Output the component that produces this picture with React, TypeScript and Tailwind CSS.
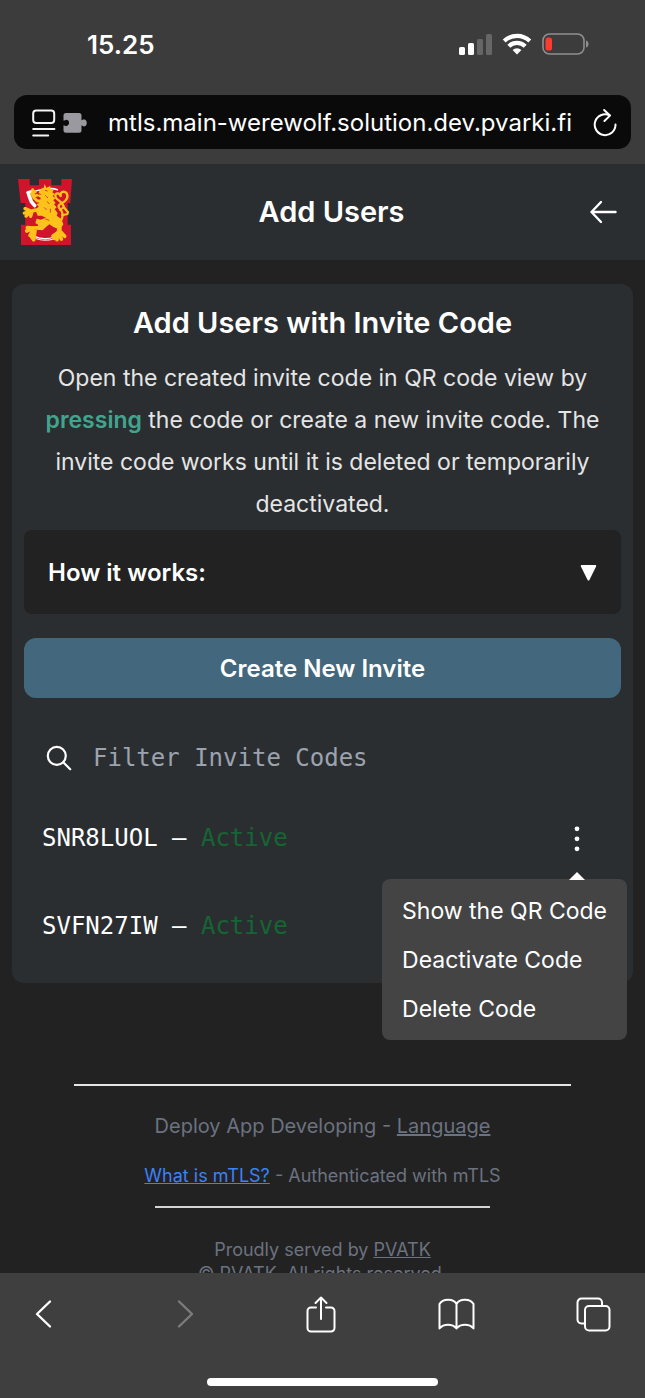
import React from "react";

function SignalIcon() {
  return (
    <svg width="34" height="21" viewBox="0 0 34 21" aria-hidden="true">
      <rect x="1" y="13" width="6" height="8" rx="1.6" fill="#fff" />
      <rect x="10" y="9" width="6" height="12" rx="1.6" fill="#fff" />
      <rect x="19" y="5" width="6" height="16" rx="1.6" fill="#666" />
      <rect x="28" y="0" width="6" height="21" rx="1.6" fill="#666" />
    </svg>
  );
}

function WifiIcon() {
  return (
    <svg width="30" height="22" viewBox="0 0 30 22" fill="none" stroke="#fff" strokeWidth="4.2" aria-hidden="true">
      <path d="M2.200 8a18.400 18.400 0 0 1 25.600 0" />
      <path d="M6.800 13.200a11.800 11.800 0 0 1 16.400 0" />
      <path d="M10.600 16.900a6.400 6.400 0 0 1 8.800 0L15 21.600z" fill="#fff" stroke="none" />
    </svg>
  );
}

function BatteryIcon() {
  return (
    <svg width="48" height="22" viewBox="0 0 48 22" aria-hidden="true">
      <rect x="1" y="1" width="41" height="20" rx="6.5" fill="none" stroke="#8e8e8e" strokeWidth="1.6" />
      <path d="M44 7.500c3.400 1 3.400 6 0 7z" fill="#8e8e8e" />
      <rect x="3.500" y="4.500" width="6.500" height="13" rx="2.600" fill="#ff3b30" />
    </svg>
  );
}

function ReaderIcon() {
  return (
    <svg width="24" height="28" viewBox="0 0 24 28" fill="none" stroke="#f4f4f4" strokeWidth="2" strokeLinecap="round" aria-hidden="true">
      <rect x="1.2" y="1.5" width="21" height="12.4" rx="3" />
      <path d="M1.2 20h21.2M1.2 26.600h15" />
    </svg>
  );
}

function PuzzleIcon() {
  return (
    <svg width="24" height="20" viewBox="0 0 24 20" aria-hidden="true">
      <path
        fill="#9a99a0"
        d="M3 0h13a2.500 2.500 0 0 1 2.500 2.500V7.200c1 .3 1.500-1.200 3-.8 3.200.8 3 6.600-.2 7-1.300.2-1.800-1.300-2.800-.9v4.700A2.500 2.500 0 0 1 16 19.700H3A2.500 2.500 0 0 1 .5 17.200v-5c1-.4 1.500 1 3 .8 3.400-.6 3.400-5.600.2-6.200C2.200 6.600 1.500 8 .5 7.600V2.500A2.500 2.500 0 0 1 3 0z"
      />
    </svg>
  );
}

function ReloadIcon() {
  return (
    <svg width="24" height="30" viewBox="0 0 24 30" fill="none" stroke="#fff" strokeWidth="2" strokeLinecap="round" strokeLinejoin="round" aria-hidden="true">
      <path d="M22.500 16.500A10.400 10.400 0 1 1 16.500 7.300" />
      <path d="M11.100 2l5.900 5.600-5.600 5.400" />
    </svg>
  );
}

function Crest() {
  return (
    <svg width="56" height="68" viewBox="54 55 168 204" role="img" aria-label="Crest">
      <path fill="#d0142c" d="M54 58H89V77H117V58H154V77H184V58H216L211 130H203V195H213V256H63V195H76V130H62Z" />
      <g fill="none" stroke="#fff" strokeLinecap="round">
        <path d="M84 99L96 96M86 104L94 126L104 138" strokeWidth="11" />
        <path d="M104 95C116 90 128 91 138 89C150 86 160 86 172 90" strokeWidth="5" />
        <path d="M106 231C122 239 146 239 162 232" strokeWidth="4" />
        <path d="M108 237C124 243 148 243 162 238" strokeWidth="3" />
      </g>
      <g fill="none" stroke="#fdc31a" strokeLinecap="round" strokeLinejoin="round">
        <path d="M172 194C190 182 192 160 180 148C168 135 184 134 195 124C207 112 203 97 191 96C183 96 181 103 182 109C177 97 165 100 166 110C168 122 184 123 188 134C191 145 198 151 204 158" strokeWidth="7" />
        <path d="M180 150L190 144M186 167L203 163" strokeWidth="6" />
        <path d="M136 141C118 155 108 148 94 155L73 160M93 154L75 147M90 158L78 169M96 157L92 170" strokeWidth="10" />
        <path d="M98 90L101 113L112 124L130 124M94 103L106 96M98 110L110 107" strokeWidth="9" />
        <path d="M131 188L116 204L98 205L82 204M98 205L80 214M101 207L90 227M106 205L101 240M93 229L101 240" strokeWidth="11" />
        <path d="M167 190L180 207L172 223L162 236M170 222L159 229M171 222L171 240M174 217L184 238M176 210L194 230" strokeWidth="11" />
      </g>
      <path
        fill="#fdc31a"
        d="M117 96L125 86L131 85L134 73L139 84L151 79L152 89L161 91L157 98L164 103L158 109L166 116L160 122L167 130L162 134L170 143L164 149L173 160L170 168L184 178L190 194L180 210L160 202L148 194L139 201L128 212L111 210L115 196L106 190L110 177L122 180L138 174L125 168L113 168L107 153L116 140L109 134L118 130L113 121L121 122L122 114L113 110L116 104L126 105L116 100Z"
      />
      <g fill="none" stroke="#d0142c" strokeWidth="2.200" strokeLinecap="round">
        <path d="M136 92L142 94M137 108L143 114M142 126L147 132M133 144L139 150M151 148L151 158M137 178L147 182" />
      </g>
    </svg>
  );
}

const stroke = {
  fill: "none",
  stroke: "currentColor",
  strokeWidth: 2,
  strokeLinecap: "round" as const,
  strokeLinejoin: "round" as const,
  "aria-hidden": true,
};

function BrowserTop() {
  return (
    <header className="shrink-0 bg-[#3c3c3c] px-3.5 pb-[15px]">
      <div className="flex h-[95px] items-center justify-between pr-[41px] pb-[7px] pl-[73px]">
        <span className="text-[26px] font-semibold">15.25</span>
        <div className="flex items-center gap-[10px]">
          <SignalIcon />
          <WifiIcon />
          <BatteryIcon />
        </div>
      </div>
      <div className="flex h-[54px] items-center rounded-[13px] bg-[#0a0a0a] pt-0.5 pr-3.5 pl-[18px]">
        <button type="button" aria-label="Page menu" className="flex items-center gap-[7px]">
          <ReaderIcon />
          <PuzzleIcon />
        </button>
        <span className="min-w-0 flex-1 text-center text-[24px] whitespace-nowrap">mtls.main-werewolf.solution.dev.pvarki.fi</span>
        <button type="button" aria-label="Reload">
          <ReloadIcon />
        </button>
      </div>
    </header>
  );
}

function InviteRow({ code, open }: { code: string; open?: boolean }) {
  return (
    <li className="relative flex h-[88px] items-center justify-between pr-[26px] pl-[18px]">
      <p className="font-['DejaVu_Sans_Mono',monospace] text-[24px]">
        {code} – <span className="text-[#166534]">Active</span>
      </p>
      {open && (
        <>
          <button type="button" aria-label="Code actions" aria-expanded="true" className="w-9">
            <svg width="36" height="28" viewBox="0 0 36 28" fill="#fff" aria-hidden="true">
              <circle cx="18" cy="4.800" r="2.400" />
              <circle cx="18" cy="14.800" r="2.400" />
              <circle cx="18" cy="24.800" r="2.400" />
            </svg>
          </button>
          <div role="menu" className="absolute top-[85px] -right-1.5 z-10 rounded-lg bg-[#444444] px-5 pt-2 pb-1.5 text-[23px]">
            <svg width="16" height="8" viewBox="0 0 16 8" fill="#fff" className="absolute -top-[7px] right-[42px]" aria-hidden="true">
              <path d="M0 8l8-8 8 8z" />
            </svg>
            {["Show the QR Code", "Deactivate Code", "Delete Code"].map((label) => (
              <button key={label} type="button" role="menuitem" className="block h-[49px] w-full text-left whitespace-nowrap">
                {label}
              </button>
            ))}
          </div>
        </>
      )}
    </li>
  );
}

function BrowserBottom() {
  return (
    <nav aria-label="Browser" className="flex h-[125px] shrink-0 flex-col items-center justify-between bg-[#3f3f40] pb-3">
      <div className="flex h-[82px] w-full items-center justify-between pr-[34px] pl-[35px]">
        <button type="button" aria-label="Back">
          <svg width="17" height="30" viewBox="0 0 17 30" {...stroke} strokeWidth={2.400}>
            <path d="M15 2.500L2 15 15 27.500" />
          </svg>
        </button>
        <button type="button" aria-label="Forward" className="ml-[86px] text-[#7c7c7c]">
          <svg width="17" height="30" viewBox="0 0 17 30" {...stroke} strokeWidth={2.400}>
            <path d="M2 2.500L15 15 2 27.500" />
          </svg>
        </button>
        <button type="button" aria-label="Share" className="ml-[73px]">
          <svg width="30" height="38" viewBox="0 0 30 38" {...stroke}>
            <path d="M10 12.500H5a3.500 3.500 0 0 0-3.500 3.500v17A3.500 3.500 0 0 0 5 36.500h20a3.500 3.500 0 0 0 3.500-3.500V16a3.500 3.500 0 0 0-3.500-3.500h-5M15 24V2.500M9.500 8L15 2.500 20.500 8" />
          </svg>
        </button>
        <button type="button" aria-label="Bookmarks" className="ml-16">
          <svg width="37" height="32" viewBox="0 0 37 32" {...stroke}>
            <path d="M18.500 6C15.500 0 4.500.5 1.500 6v24.500c4-5 13-5 17 0 4-5 13-5 17 0V6c-3-5.500-14-6-17 0zM18.500 6v24.500" />
          </svg>
        </button>
        <button type="button" aria-label="Tabs" className="ml-[62px]">
          <svg width="35" height="35" viewBox="0 0 35 35" {...stroke}>
            <path d="M9 26.500H5.500a4 4 0 0 1-4-4v-17a4 4 0 0 1 4-4H22a4 4 0 0 1 4 4V9" />
            <rect x="9" y="9" width="24.500" height="24.500" rx="4" />
          </svg>
        </button>
      </div>
      <div className="h-2 w-[231px] rounded-full bg-white" />
    </nav>
  );
}

export default function App() {
  return (
    <div className="flex h-dvh flex-col overflow-hidden bg-[#222222] font-[Inter,'Liberation_Sans',sans-serif] text-white">
      <BrowserTop />
      <div className="min-h-0 flex-1 overflow-y-auto [scrollbar-width:none]">
        <header className="flex h-24 items-center justify-between bg-[#2b2e31] pr-7 pl-[18px]">
          <Crest />
          <h1 className="text-[29px] font-semibold">Add Users</h1>
          <button type="button" aria-label="Back to users">
            <svg width="28" height="24" viewBox="0 0 28 24" {...stroke} strokeWidth={2.400}>
              <path d="M26.500 12H2.500M12 2L2.500 12 12 22" />
            </svg>
          </button>
        </header>

        <main className="mx-3 mt-6 rounded-xl bg-[#2b2e31] px-3 pt-[19px] pb-[13px]">
          <h2 className="text-center text-[29px] leading-10 font-semibold">Add Users with Invite Code</h2>
          <p className="mt-3.5 text-center text-[23px] leading-[42px] text-[#e5e5e5]">
            Open the created invite code in QR code view by{" "}
            <span className="font-semibold text-[#41a58d]">pressing</span> the code or create a new invite code. The
            invite code works until it is deleted or temporarily deactivated.
          </p>
          <button type="button" aria-expanded="false" className="mt-[5px] flex h-[84px] w-full items-center justify-between rounded-lg bg-[#222222] px-6 pt-0.5 text-[24px] font-semibold">
            How it works:
            <svg width="17" height="16" viewBox="0 0 17 16" fill="#fff" aria-hidden="true">
              <path d="M1.800 0h13.400a1 1 0 0 1 .9 1.400L9.400 15a1 1 0 0 1-1.800 0L.9 1.400A1 1 0 0 1 1.800 0z" />
            </svg>
          </button>
          <button type="button" className="mt-6 h-[60px] w-full rounded-xl bg-[#43687d] pt-0.5 text-[24px] font-semibold">
            Create New Invite
          </button>
          <label className="mt-6 flex h-[72px] items-center gap-[21px] pl-[22px]">
            <svg width="26" height="26" viewBox="0 0 26 26" {...stroke} strokeWidth={2.200}>
              <circle cx="10.800" cy="10.800" r="9" />
              <path d="M17.200 17.200l7 7" />
            </svg>
            <input
              type="search"
              aria-label="Filter Invite Codes"
              placeholder="Filter Invite Codes"
              className="min-w-0 flex-1 bg-transparent font-['DejaVu_Sans_Mono',monospace] text-[24px] outline-none placeholder:text-[#9ca3af]"
            />
          </label>
          <ul>
            <InviteRow code="SNR8LUOL" open />
            <InviteRow code="SVFN27IW" />
          </ul>
        </main>

        <footer className="mx-3 mt-[101px] flex flex-col items-center text-[#6b7280]">
          <hr className="w-4/5 border-t-2 border-[#e5e5e5]" />
          <p className="mt-6 text-[20px] leading-8">
            Deploy App Developing - <a href="#language" className="underline">Language</a>
          </p>
          <p className="mt-5 text-[18px] leading-7">
            <a href="#mtls" className="text-[#3b82f6] underline">What is mTLS?</a> - Authenticated with mTLS
          </p>
          <hr className="mt-4 w-[54%] border-t-2 border-[#d4d4d4]" />
          <p className="mt-[30px] text-center text-[18px] leading-6">
            Proudly served by <a href="#pvatk" className="underline">PVATK</a>
            <br />© PVATK. All rights reserved.
          </p>
        </footer>
      </div>
      <BrowserBottom />
    </div>
  );
}
